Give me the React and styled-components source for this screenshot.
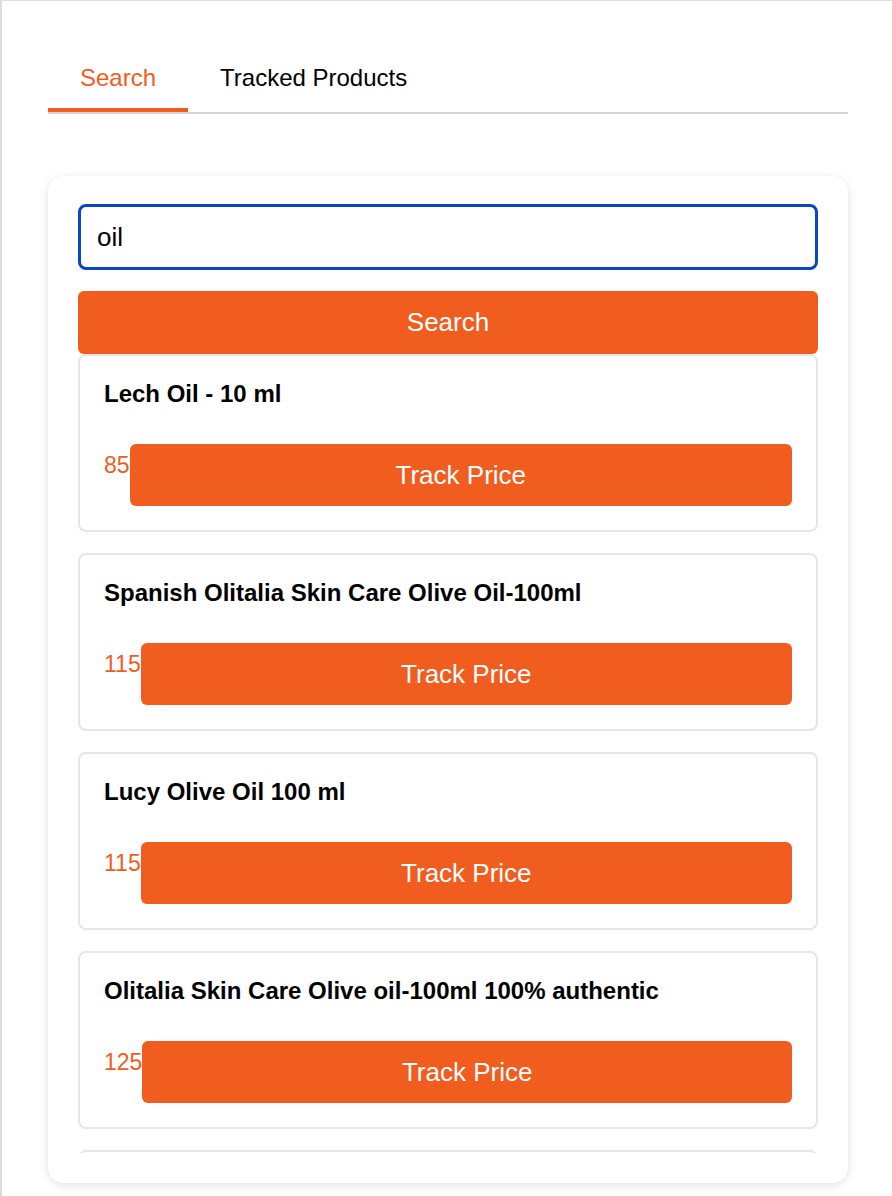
import React, { useState } from "react";
import styled, { createGlobalStyle } from "styled-components";

const ORANGE = "#f05d1f";

const GlobalStyle = createGlobalStyle`
  html, body { margin: 0; padding: 0; background: #ffffff; }
  body { font-family: "Liberation Sans", Arial, Helvetica, sans-serif; color: #000; }
  * { box-sizing: border-box; }
`;

const Page = styled.div`
  min-height: 1196px;
  border-top: 1px solid #dedede;
  border-left: 2px solid #dcdcdc;
  padding: 47px 44px 0 46px;
`;

const TabBar = styled.div`
  display: flex;
  align-items: flex-end;
  border-bottom: 2px solid #d4d4d4;
`;

const Tab = styled.button`
  font-family: inherit;
  font-size: 24px;
  line-height: normal;
  background: none;
  border: none;
  border-bottom: 4px solid ${(p) => (p.$active ? ORANGE : "transparent")};
  color: ${(p) => (p.$active ? ORANGE : "#000")};
  padding: 16px 32px 16px;
  cursor: pointer;
`;

const Panel = styled.div`
  margin-top: 62px;
  background: #fff;
  border-radius: 16px;
  box-shadow: 0 2px 10px rgba(0, 0, 0, 0.12);
  padding: 28px 30px 30px;
  display: flex;
  flex-direction: column;
`;

const SearchInput = styled.input`
  height: 66px;
  width: 100%;
  border: 3px solid #0a46c4;
  border-radius: 8px;
  padding: 0 16px;
  font-family: inherit;
  font-size: 26px;
  color: #000;
  outline: none;
`;

const PrimaryButton = styled.button`
  background: ${ORANGE};
  color: #fff;
  border: none;
  border-radius: 6px;
  font-family: inherit;
  font-size: 26px;
  height: ${(p) => p.$h || 62}px;
  cursor: pointer;
`;

const SearchButton = styled(PrimaryButton)`
  margin-top: 21px;
  width: 100%;
`;

const Results = styled.div`
  height: 799px;
  overflow: hidden;
  display: flex;
  flex-direction: column;
  gap: 21px;
`;

const ResultCard = styled.div`
  flex: none;
  height: 178px;
  border: 2px solid #e6e6e6;
  border-radius: 8px;
  padding: 24px;
`;

const Title = styled.div`
  font-size: 24px;
  font-weight: bold;
  line-height: normal;
  margin-bottom: 36px;
  white-space: nowrap;
`;

const Row = styled.div`
  display: flex;
  align-items: flex-start;
`;

const Price = styled.span`
  color: ${ORANGE};
  font-size: 23px;
  line-height: normal;
  margin-top: 8px;
`;

const TrackButton = styled(PrimaryButton)`
  flex: 1;
`;

const products = [
  { title: "Lech Oil - 10 ml", price: 85 },
  { title: "Spanish Olitalia Skin Care Olive Oil-100ml", price: 115 },
  { title: "Lucy Olive Oil 100 ml", price: 115 },
  { title: "Olitalia Skin Care Olive oil-100ml 100% authentic", price: 125 },
];

export default function App() {
  const [tab, setTab] = useState("search");
  const [query, setQuery] = useState("oil");
  return (
    <>
      <GlobalStyle />
      <Page>
        <TabBar>
          <Tab $active={tab === "search"} onClick={() => setTab("search")}>
            Search
          </Tab>
          <Tab $active={tab === "tracked"} onClick={() => setTab("tracked")}>
            Tracked Products
          </Tab>
        </TabBar>
        <Panel>
          <SearchInput value={query} onChange={(e) => setQuery(e.target.value)} />
          <SearchButton $h={63}>Search</SearchButton>
          <Results>
            {products.map((p, i) => (
              <ResultCard key={i}>
                <Title>{p.title}</Title>
                <Row>
                  <Price>{p.price}</Price>
                  <TrackButton>Track Price</TrackButton>
                </Row>
              </ResultCard>
            ))}
            <ResultCard aria-hidden="true" />
          </Results>
        </Panel>
      </Page>
    </>
  );
}
